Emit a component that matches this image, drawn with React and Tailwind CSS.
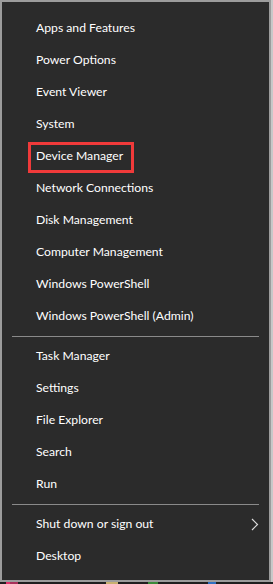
import React from 'react';

const groups = [
  ['Apps and Features', 'Power Options', 'Event Viewer', 'System', 'Device Manager', 'Network Connections', 'Disk Management', 'Computer Management', 'Windows PowerShell', 'Windows PowerShell (Admin)'],
  ['Task Manager', 'Settings', 'File Explorer', 'Search', 'Run'],
  ['Shut down or sign out', 'Desktop'],
];

const Chevron = () => (
  <svg width="8" height="13" viewBox="0 0 8 13" className="mr-[10px]">
    <path d="M1 1 L6.5 6.5 L1 12" fill="none" stroke="#dcdcdc" strokeWidth="1.2" />
  </svg>
);

const Item = ({ label }) => {
  const highlighted = label === 'Device Manager';
  const hasSub = label === 'Shut down or sign out';
  return (
    <div className="h-8 flex items-center justify-between pl-[34px] relative">
      <span className="text-[12.2px] text-white leading-none">{label}</span>
      {hasSub && <Chevron />}
      {highlighted && (
        <div className="absolute left-[26px] top-[2px] w-[106px] h-[31px] border-[3px] border-[#f03a3a] pointer-events-none" />
      )}
    </div>
  );
};

export default function App() {
  return (
    <div className="w-[273px] h-[584px] bg-[#c8c8c8] relative overflow-hidden" style={{ fontFamily: 'Lato, "Open Sans", sans-serif' }}>
      <div className="w-[271px] h-[582px] bg-[#2b2b2b] border-2 border-[#9c9c9c] pt-[10px] pb-[6px] flex flex-col">
        {groups.map((g, gi) => (
          <div key={gi}>
            {gi > 0 && (
              <div className="h-2 flex items-center px-[10px]">
                <div className="h-px w-full bg-[#8a8a8a]" />
              </div>
            )}
            {g.map((l) => (
              <Item key={l} label={l} />
            ))}
          </div>
        ))}
      </div>
      <div className="absolute left-0 bottom-0 w-full h-[2px] bg-[#1f1f1f] flex">
        <div className="w-[4px] h-full bg-[#e0306a] ml-[6px]" />
        <div className="w-[8px] h-full bg-[#a8305a]" />
        <div className="w-[12px] h-full bg-[#c8b070] ml-[88px]" />
        <div className="w-[10px] h-full bg-[#3a8a3a] ml-[30px]" />
        <div className="w-[8px] h-full bg-[#3070c0] ml-[50px]" />
      </div>
    </div>
  );
}
